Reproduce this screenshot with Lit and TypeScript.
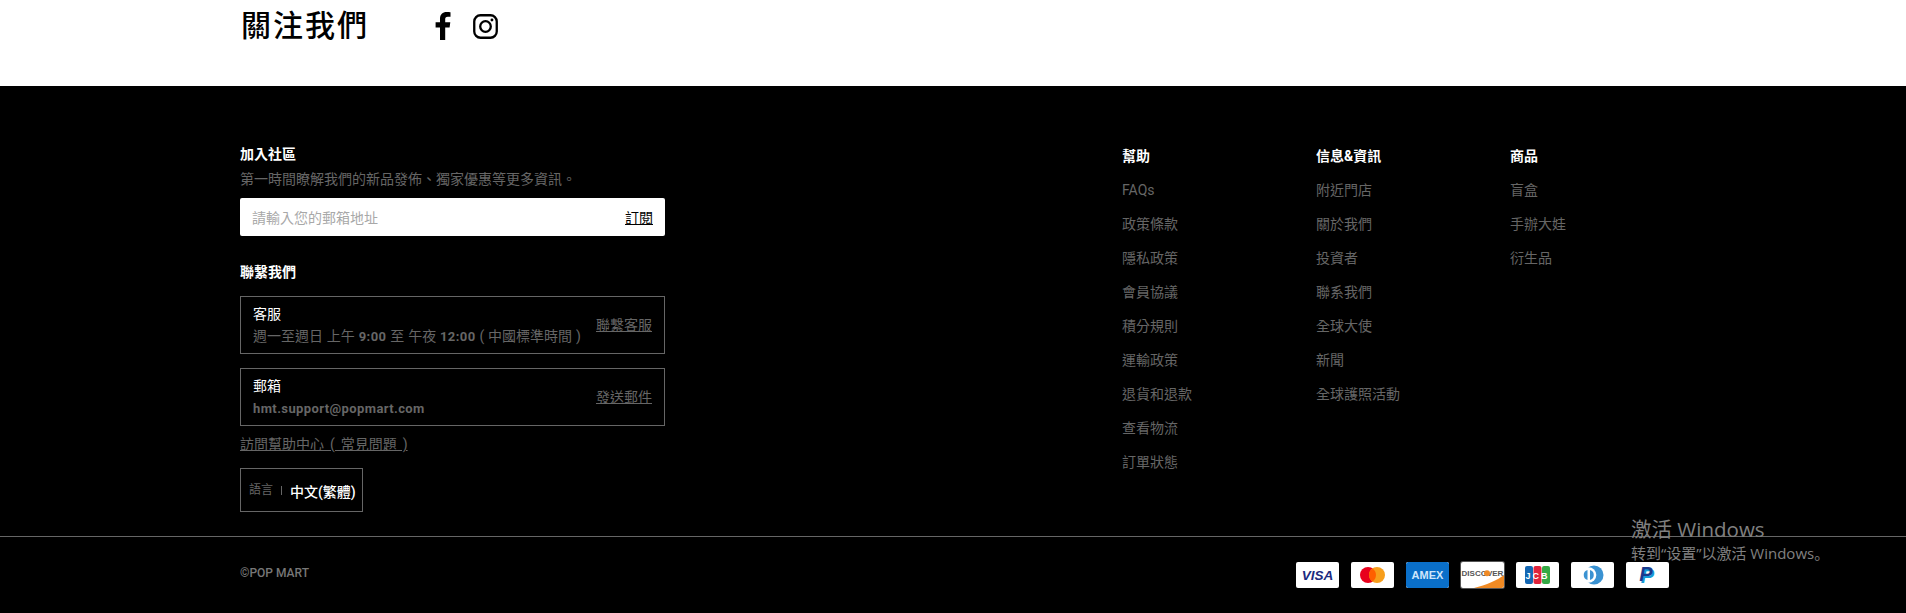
import { LitElement, html, css, svg } from "lit";
import { customElement } from "lit/decorators.js";

const HELP = ["FAQs", "政策條款", "隱私政策", "會員協議", "積分規則", "運輸政策", "退貨和退款", "查看物流", "訂單狀態"];
const INFO = ["附近門店", "關於我們", "投資者", "聯系我們", "全球大使", "新聞", "全球護照活動"];
const GOODS = ["盲盒", "手辦大娃", "衍生品"];

const CARDS = [
  svg`<text x="21.500" y="18" text-anchor="middle" font-family="Liberation Sans" font-weight="700" font-style="italic" font-size="13.500" fill="#1a2a80">VISA</text>`,
  svg`<circle cx="17" cy="13" r="8" fill="#e8001c"/><circle cx="26" cy="13" r="8" fill="#f79e1b"/><path d="M21.500 6.400a8 8 0 0 1 0 13.200a8 8 0 0 1 0-13.200z" fill="#ff5f00"/>`,
  svg`<rect width="43" height="26" rx="2" fill="#0a6fc9"/><text x="21.500" y="17" text-anchor="middle" font-family="Liberation Sans" font-weight="700" font-size="11" fill="#cfe6fb">AMEX</text>`,
  svg`<path d="M13 26C25 23 37 18 43 13V24a2 2 0 0 1-2 2z" fill="#f08a24"/><text x="21.500" y="14" text-anchor="middle" font-family="Liberation Sans" font-weight="700" font-size="8" fill="#555">DISCOVER</text><circle cx="26" cy="11.200" r="3" fill="#f08a24"/>`,
  svg`<rect x="9" y="4" width="8" height="18" rx="2" fill="#1467b3"/><rect x="17.500" y="4" width="8" height="18" rx="2" fill="#e0243c"/><rect x="26" y="4" width="8" height="18" rx="2" fill="#35a945"/><text x="21.600" y="17" text-anchor="middle" font-family="Liberation Sans" font-weight="700" font-size="9" letter-spacing="2" fill="#fff">JCB</text>`,
  svg`<circle cx="23" cy="13" r="9.500" fill="#3a92d2"/><circle cx="17.500" cy="13" r="7.800" fill="#fff"/><path d="M16.500 8a5.200 5.200 0 0 0 0 10z" fill="#3a92d2"/><path d="M19 8a5.200 5.200 0 0 1 0 10z" fill="#3a92d2"/>`,
  svg`<text x="21.500" y="21" text-anchor="middle" font-family="Liberation Sans" font-weight="700" font-style="italic" font-size="20" fill="#169bd7">P</text><text x="20" y="19" text-anchor="middle" font-family="Liberation Sans" font-weight="700" font-style="italic" font-size="20" fill="#1a3a8c">P</text>`,
];

@customElement("app-root")
export class AppRoot extends LitElement {
  static styles = css`
    :host {
      display: block;
      position: relative;
      height: 613px;
      overflow: hidden;
      background: #000;
      font-family: "Roboto", "Noto Sans CJK TC", sans-serif;
      font-size: 14px;
      color: #666;
    }
    a { color: inherit; }
    .follow {
      height: 86px;
      box-sizing: border-box;
      background: #fff;
      color: #000;
      padding: 7px 0 0 241px;
      display: flex;
      align-items: flex-start;
    }
    .follow h2 {
      margin: 0;
      width: 190px;
      font-size: 30px;
      line-height: 38px;
      letter-spacing: 2px;
      font-weight: 500;
    }
    .icons { display: flex; gap: 18px; padding-top: 4px; }
    .icons svg { display: block; }
    .icons .ig { margin-top: 3px; }
    .main {
      height: 450px;
      box-sizing: border-box;
      padding: 58px 0 0 240px;
      display: flex;
    }
    .left { width: 425px; margin-right: 457px; }
    .head {
      margin: 0;
      font-size: 14px;
      line-height: 20px;
      font-weight: 700;
      color: #fff;
    }
    .sub { margin: 3px 0 7px; line-height: 24px; }
    .input {
      height: 38px;
      background: #fff;
      border-radius: 2px;
      display: flex;
      align-items: center;
      justify-content: space-between;
      padding: 0 12px;
      box-sizing: border-box;
      color: #a8a8a8;
    }
    .input a { color: #000; }
    .contact-head { margin: 26px 0 14px; }
    .box {
      height: 58px;
      box-sizing: border-box;
      border: 1px solid #666;
      padding: 7px 12px;
      margin-bottom: 14px;
      display: flex;
      align-items: flex-start;
      justify-content: space-between;
    }
    .box .t { color: #fff; line-height: 20px; }
    .box .d { line-height: 22px; margin-top: 1px; word-spacing: .4px; }
    .box b { font-size: 13px; font-weight: 700; letter-spacing: .4px; }
    .box a { align-self: center; margin-bottom: 3px; }
    .faq { display: block; margin-top: -6px; line-height: 20px; word-spacing: 2.500px; }
    .lang {
      margin-top: 14px;
      width: 123px;
      height: 44px;
      box-sizing: border-box;
      border: 1px solid #666;
      padding-left: 8px;
      display: flex;
      align-items: center;
      font-size: 12px;
    }
    .lang .label { padding-bottom: 4px; }
    .lang .sep { width: 1px; height: 9px; background: #666; margin: 0 8px; }
    .lang .v { color: #fff; font-size: 14px; font-weight: 500; padding-top: 1px; }
    .col { width: 194px; margin-top: 2px; }
    .col .head { margin-bottom: 14px; }
    .col a {
      display: block;
      height: 34px;
      line-height: 20px;
      text-decoration: none;
    }
    .bottom {
      height: 77px;
      box-sizing: border-box;
      border-top: 1px solid #666;
      padding: 25px 0 0 240px;
      display: flex;
      justify-content: space-between;
    }
    .copy { font-size: 12px; line-height: 22px; font-weight: 500; color: #777; }
    .cards { display: flex; gap: 12px; margin-right: 237px; }
    .card { display: block; width: 43px; height: 26px; background: #fff; border-radius: 2px; }
    .card.framed { box-shadow: 0 0 0 1px #555; }
    .watermark {
      position: absolute;
      left: 1631px;
      top: 515px;
      color: #808080;
      font-family: "Open Sans", "Noto Sans CJK SC", sans-serif;
      font-size: 15px;
      line-height: 20px;
      pointer-events: none;
      white-space: nowrap;
    }
    .watermark .big { font-size: 20.500px; line-height: 28px; }
  `;

  private col(title: string, items: string[]) {
    return html`<div class="col">
      <h4 class="head">${title}</h4>
      ${items.map((i) => html`<a href="#">${i}</a>`)}
    </div>`;
  }

  render() {
    return html`
      <section class="follow">
        <h2>關注我們</h2>
        <div class="icons">
          <svg width="24" height="30" viewBox="0 0 24 30" aria-label="Facebook">
            <path d="M9 29V16.500H4.600V11.300H9V7.700C9 3.300 11.700 1 15.600 1c1.800 0 3.400.1 3.900.2v4.500h-2.700c-2.100 0-2.600 1-2.600 2.500v3.100h5.100l-.7 5.200h-4.400V29z" fill="#000"/>
          </svg>
          <svg class="ig" width="25" height="25" viewBox="0 0 26 26" fill="none" stroke="#000" aria-label="Instagram">
            <rect x="1.300" y="1.300" width="23.400" height="23.400" rx="6.500" stroke-width="2.400"/>
            <circle cx="13" cy="13" r="5.500" stroke-width="2.400"/>
            <circle cx="19.700" cy="6.300" r="1.500" fill="#000" stroke="none"/>
          </svg>
        </div>
      </section>
      <section class="main">
        <div class="left">
          <h4 class="head">加入社區</h4>
          <p class="sub">第一時間瞭解我們的新品發佈、獨家優惠等更多資訊。</p>
          <div class="input"><span>請輸入您的郵箱地址</span><a href="#">訂閱</a></div>
          <h4 class="head contact-head">聯繫我們</h4>
          <div class="box">
            <div>
              <div class="t">客服</div>
              <div class="d">週一至週日 上午 <b>9:00</b> 至 午夜 <b>12:00</b> ( 中國標準時間 )</div>
            </div>
            <a href="#">聯繫客服</a>
          </div>
          <div class="box">
            <div>
              <div class="t">郵箱</div>
              <div class="d"><b>hmt.support@popmart.com</b></div>
            </div>
            <a href="#">發送郵件</a>
          </div>
          <a class="faq" href="#">訪問幫助中心 ( 常見問題 )</a>
          <div class="lang"><span class="label">語言</span><span class="sep"></span><span class="v">中文(繁體)</span></div>
        </div>
        ${this.col("幫助", HELP)}
        ${this.col("信息&資訊", INFO)}
        ${this.col("商品", GOODS)}
      </section>
      <section class="bottom">
        <div class="copy">©POP MART</div>
        <div class="cards">
          ${CARDS.map((c, i) => html`<svg class="card ${i === 3 ? "framed" : ""}" viewBox="0 0 43 26">${c}</svg>`)}
        </div>
      </section>
      <div class="watermark">
        <div class="big">激活 Windows</div>
        <div>转到“设置”以激活 Windows。</div>
      </div>
    `;
  }
}
